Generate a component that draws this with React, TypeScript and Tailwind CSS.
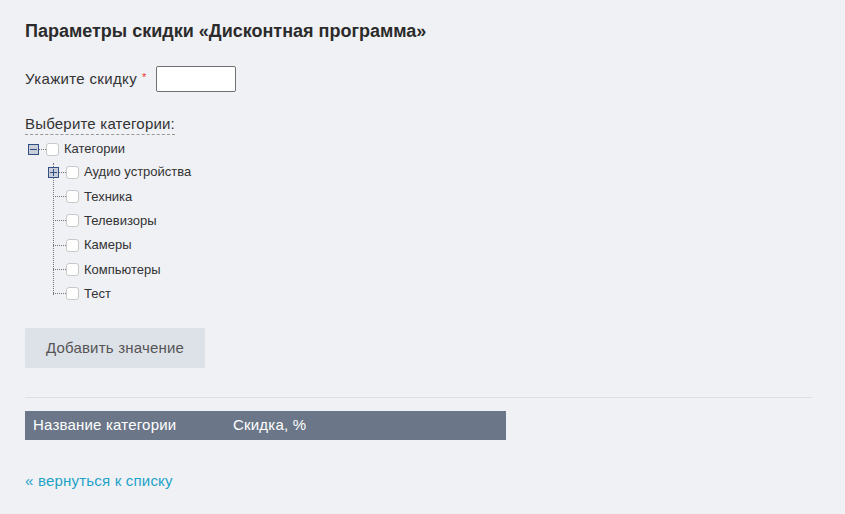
import React from 'react';

const children = ['Аудио устройства', 'Техника', 'Телевизоры', 'Камеры', 'Компьютеры', 'Тест'];

const Checkbox = () => (
  <span className="inline-block w-[13px] h-[13px] bg-white border border-[#c8c8c8] rounded-[3px] shrink-0" />
);

const ToggleBox = ({ plus }: { plus?: boolean }) => (
  <span className="relative inline-flex items-center justify-center w-[11px] h-[11px] border border-[#2f4f85] bg-[#c9ced8] shrink-0">
    <span className="absolute w-[7px] h-[1px] bg-[#2f4f85]" />
    {plus && <span className="absolute w-[1px] h-[7px] bg-[#2f4f85]" />}
  </span>
);

const App: React.FC = () => {
  return (
    <div className="min-h-[514px] bg-[#f0f1f5] pl-[25px] pr-[33px] pt-[20px] pb-6 text-[#333] tracking-[0.2px] font-['Liberation_Sans',Arial,sans-serif]">
      <h1 className="text-[18px] font-bold leading-[22px] tracking-normal text-[#2b2b2b]">
        Параметры скидки «Дисконтная программа»
      </h1>

      <div className="flex items-center mt-[24px] h-[26px]">
        <span className="text-[15px] tracking-[0.35px] text-[#333]">Укажите скидку</span>
        <span className="text-[#e33] text-[11px] ml-[5px] -mt-[3px]">*</span>
        <input className="ml-[9px] w-[80px] h-[26px] bg-white border border-[#707070] rounded-[2px] outline-none px-1 text-sm" />
      </div>

      <div className="mt-[20px]">
        <span className="inline-block text-[15px] leading-[18px] pb-[1px] border-b border-dashed border-[#999]">
          Выберите категории:
        </span>
      </div>

      <div className="mt-[4px] text-[13px] tracking-normal text-[#333]">
        <div className="flex items-center h-[18px] pl-[3px]">
          <ToggleBox />
          <span className="w-[7px] border-t border-dotted border-[#777]" />
          <Checkbox />
          <span className="ml-[5px]">Категории</span>
        </div>
        <div className="relative ml-[28px] mt-[2px]">
          <span className="absolute left-0 top-[3px] bottom-[11px] border-l border-dotted border-[#777]" />
          {children.map((c, i) => (
            <div key={c} className="flex items-center h-[24.3px]">
              {i === 0 ? (
                <span className="flex items-center -ml-[5px] w-[18px]">
                  <ToggleBox plus />
                  <span className="w-[7px] border-t border-dotted border-[#777]" />
                </span>
              ) : (
                <span className="w-[13px] border-t border-dotted border-[#777]" />
              )}
              <Checkbox />
              <span className="ml-[5px]">{c}</span>
            </div>
          ))}
        </div>
      </div>

      <button className="mt-[22px] w-[180px] h-[40px] bg-[#dde1e8] rounded-[2px] text-[15px] text-[#555]">
        Добавить значение
      </button>

      <div className="mt-[29px] border-t border-[#dcdee3]" />

      <div className="mt-[13px] w-[481px] h-[29px] bg-[#6b7789] flex items-center text-white text-[15px]">
        <span className="pl-[8px] w-[208px]">Название категории</span>
        <span>Скидка, %</span>
      </div>

      <a href="#" className="inline-block mt-[30px] text-[15px] text-[#1ea3c8]">
        « вернуться к списку
      </a>
    </div>
  );
};

export default App;
